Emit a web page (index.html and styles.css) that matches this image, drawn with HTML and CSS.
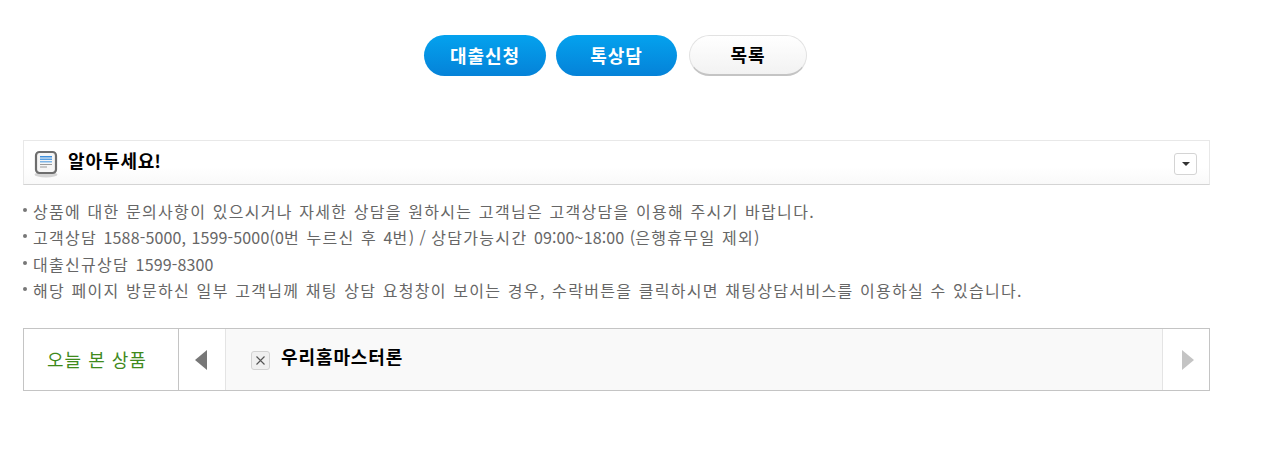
FILE: index.html
```html
<!DOCTYPE html>
<html lang="ko">
<head>
<meta charset="utf-8">
<title>알아두세요</title>
<link rel="stylesheet" href="styles.css">
</head>
<body>
<div class="page">
  <div class="actions">
    <a class="btn btn-blue btn-apply">대출신청</a>
    <a class="btn btn-blue btn-talk">톡상담</a>
    <a class="btn btn-white">목록</a>
  </div>
  <div class="notice-head">
    <svg class="doc-icon" width="24" height="28" viewBox="0 0 24 28">
      <ellipse cx="12" cy="24.500" rx="11.500" ry="3" fill="#d4d4d4"/>
      <rect x="2" y="2" width="20" height="21" rx="3.500" fill="#f6f6f6" stroke="#6d6d6d" stroke-width="2.200"/>
      <rect x="6" y="6" width="12" height="1.500" fill="#3f8fdc"/>
      <rect x="6" y="8.500" width="12" height="1.500" fill="#5aa0e2"/>
      <rect x="6" y="11" width="12" height="1.500" fill="#7db5e8"/>
      <rect x="6" y="14" width="12" height="1" fill="#9a9a9a"/>
      <rect x="6" y="16.500" width="7" height="1" fill="#9a9a9a"/>
    </svg>
    <h3 class="notice-title">알아두세요<span class="bang">!</span></h3>
    <button class="toggle" type="button"><span class="caret-down"></span></button>
  </div>
  <ul class="notes">
    <li>상품에 대한 문의사항이 있으시거나 자세한 상담을 원하시는 고객님은 고객상담을 이용해 주시기 바랍니다.</li>
    <li>고객상담 <span class="num">1588-5000, 1599-5000(0</span>번 누르신 후 <span class="num">4</span>번<span class="num">) / </span>상담가능시간 <span class="num">09:00~18:00 (</span>은행휴무일 제외<span class="num">)</span></li>
    <li>대출신규상담 <span class="num">1599-8300</span></li>
    <li>해당 페이지 방문하신 일부 고객님께 채팅 상담 요청창이 보이는 경우, 수락버튼을 클릭하시면 채팅상담서비스를 이용하실 수 있습니다.</li>
  </ul>
  <div class="recent">
    <div class="recent-label">오늘 본 상품</div>
    <div class="arrow-cell arrow-prev"><span class="tri-left"></span></div>
    <div class="recent-items">
      <span class="close-box">
        <svg width="9" height="9" viewBox="0 0 9 9"><path d="M.5.5 8.500 8.500M8.500.5.5 8.500" stroke="#555" stroke-width="1.100" fill="none"/></svg>
      </span>
      <span class="recent-name">우리홈마스터론</span>
    </div>
    <div class="arrow-cell arrow-next"><span class="tri-right"></span></div>
  </div>
</div>
</body>
</html>
```
FILE: styles.css
```css
* { box-sizing: border-box; }
html, body { margin: 0; padding: 0; background: #fff; }
body { font-family: "Noto Sans CJK KR", "Noto Sans", sans-serif; color: #666; }
.page { width: 1274px; height: 452px; padding: 35px 0 0 23px; overflow: hidden; }

.actions { display: flex; width: 1187px; padding-left: 401px; height: 42px; }
.btn { display: flex; align-items: center; justify-content: center; height: 41px; padding-bottom: 2px; border-radius: 21px; font-size: 18px; font-weight: 700; letter-spacing: 1px; }
.btn-blue { color: #fff; background: linear-gradient(#04a2ee, #0582d8); }
.btn-apply { width: 122px; margin-right: 10px; }
.btn-talk { width: 121px; margin-right: 12px; }
.btn-white { width: 118px; color: #000; background: linear-gradient(#fff, #f2f2f2); border: 1px solid #e2e2e2; border-bottom: 2px solid #c4c4c4; }

.notice-head { display: flex; align-items: center; width: 1187px; height: 45px; margin-top: 63px; padding: 0 12px 0 10px; border: 1px solid #e8e8e8; border-bottom-color: #d4d4d4; background: linear-gradient(#fff 60%, #f9f9f9); }
.doc-icon { flex: none; margin: 3px 10px 0 0; }
.notice-title { margin: 0 0 6px; flex: 1; font-size: 18px; font-weight: 700; color: #000; letter-spacing: 0.9px; }
.bang { letter-spacing: 0; margin-left: -1px; }
.toggle { display: flex; align-items: center; justify-content: center; width: 23px; height: 22px; padding: 0; margin-top: 2px; background: #fff; border: 1px solid #d4d4d4; border-radius: 3px; }
.caret-down { width: 0; height: 0; border-left: 4px solid transparent; border-right: 4px solid transparent; border-top: 4px solid #333; }

.notes { list-style: none; margin: 13px 0 0; padding: 0; width: 1187px; font-size: 16px; line-height: 26.300px; letter-spacing: 1.3px; word-spacing: 0.7px; color: #666; }
.notes li { position: relative; padding-left: 10px; white-space: nowrap; height: 26.300px; }
.notes li::before { content: ""; position: absolute; left: 0; top: 10px; width: 4px; height: 4px; border-radius: 50%; background: #777; }
.num { letter-spacing: 0.15px; }

.recent { display: flex; width: 1187px; height: 63px; margin-top: 25px; border: 1px solid #c4c4c4; }
.recent-label { width: 155px; display: flex; align-items: center; padding: 0 0 2px 23px; font-size: 18px; letter-spacing: 1px; color: #3f8a1c; border-right: 1px solid #c4c4c4; }
.arrow-cell { display: flex; align-items: center; justify-content: center; }
.arrow-prev { width: 46px; padding-right: 2px; }
.arrow-next { width: 46px; padding-left: 3px; }
.recent-items { flex: 1; display: flex; align-items: center; padding: 0 0 7px 25px; background: #f9f9f9; border-left: 1px solid #e4e4e4; border-right: 1px solid #e4e4e4; }
.close-box { display: flex; align-items: center; justify-content: center; width: 19px; height: 19px; margin: 9px 11px 0 0; background: #f0f0f0; border: 1px solid #d2d2d2; border-radius: 3px; }
.recent-name { font-size: 18px; font-weight: 700; color: #000; letter-spacing: 0.9px; }
.tri-left { width: 0; height: 0; border-top: 10px solid transparent; border-bottom: 10px solid transparent; border-right: 12px solid #777; }
.tri-right { width: 0; height: 0; border-top: 10px solid transparent; border-bottom: 10px solid transparent; border-left: 12px solid #c4c4c4; }
```
